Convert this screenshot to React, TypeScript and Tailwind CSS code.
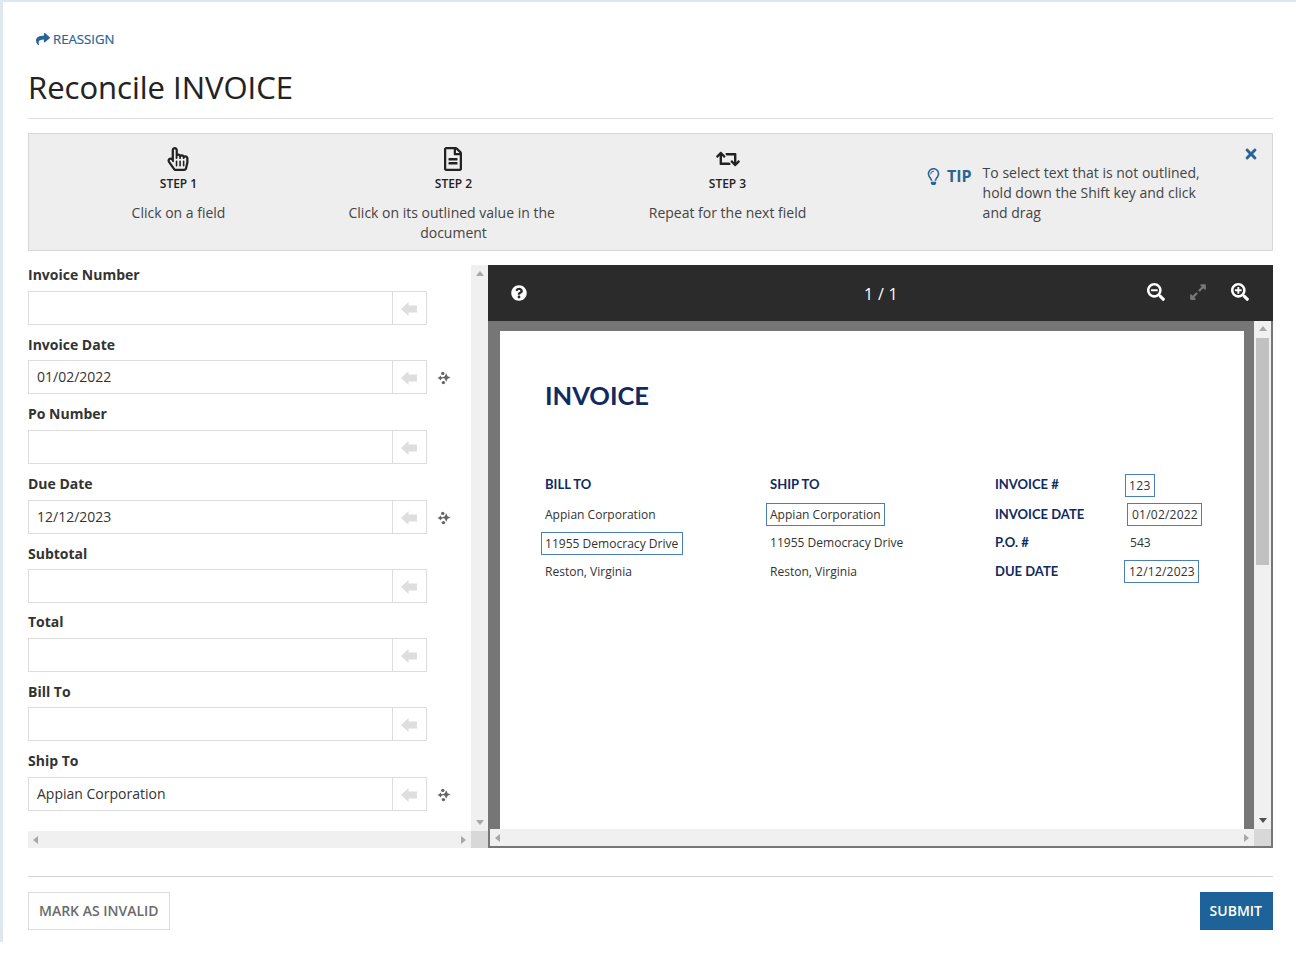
import React from "react";
import { FaRegHandPointer, FaRegFileAlt, FaRetweet, FaShare, FaTimes, FaSearchMinus, FaSearchPlus, FaExpandAlt, FaQuestionCircle, FaRegLightbulb } from "react-icons/fa";

const fields: { label: string; value: string; spark?: boolean; gap: string; labelClass: string }[] = [
  { label: "Invoice Number", value: "", gap: "mt-0", labelClass: "" },
  { label: "Invoice Date", value: "01/02/2022", spark: true, gap: "mt-[9px]", labelClass: "pt-[1px]" },
  { label: "Po Number", value: "", gap: "mt-[10px]", labelClass: "" },
  { label: "Due Date", value: "12/12/2023", spark: true, gap: "mt-[10px]", labelClass: "" },
  { label: "Subtotal", value: "", gap: "mt-[9px]", labelClass: "pt-[1px]" },
  { label: "Total", value: "", gap: "mt-[9px]", labelClass: "" },
  { label: "Bill To", value: "", gap: "mt-[9px]", labelClass: "pt-[1px]" },
  { label: "Ship To", value: "Appian Corporation", spark: true, gap: "mt-[10px]", labelClass: "" },
];

function Sparkle() {
  return (
    <svg width="14" height="14" viewBox="0 0 14 14" className="text-[#666]" fill="currentColor">
      <path d="M9.2 2.2 L10.6 5.2 L13.6 6.5 L10.6 7.8 L9.2 10.8 L7.8 7.8 L4.8 6.5 L7.8 5.2 Z" />
      <path d="M3.4 4.4 L4.4 6 L6.4 7 L4.4 8 L3.4 9.6 L2.4 8 L0.4 7 L2.4 6 Z" />
      <circle cx="5.8" cy="2.4" r="1.7" />
      <circle cx="6.4" cy="11.6" r="1.7" />
    </svg>
  );
}

function BlockArrow() {
  return (
    <svg width="16" height="14" viewBox="0 0 16 14" fill="#dedede">
      <path d="M0 7 L7.5 0 L7.5 3.5 L16 3.5 L16 10.5 L7.5 10.5 L7.5 14 Z" />
    </svg>
  );
}

function Field({ label, value, spark, gap, labelClass }: { label: string; value: string; spark?: boolean; gap: string; labelClass: string }) {
  return (
    <div className={"flex flex-col shrink-0 " + gap}>
      <div className={"h-[26px] text-[14px] leading-[20px] font-bold text-[#333] " + labelClass}>{label}</div>
      <div className="flex items-center w-[423px]">
        <div className="w-[364px] h-[34px] border border-[#dcdcdc] border-r-0 px-2 text-[14px] leading-[32px] text-[#333]">{value}</div>
        <div className="w-[35px] h-[34px] border border-[#dcdcdc] flex items-center justify-center pt-[1px] pr-[1px]">
          <BlockArrow />
        </div>
        {spark && <div className="ml-[10px] pt-[1px]"><Sparkle /></div>}
      </div>
    </div>
  );
}

function Step({ icon, title, text, className, iconClass }: { icon: React.ReactNode; title: string; text: React.ReactNode; className: string; iconClass: string }) {
  return (
    <div className={"w-[275px] flex flex-col items-center text-center pt-[13px] " + className}>
      <div className={"h-[24px] flex items-center justify-center text-[24px] text-[#222] " + iconClass}>{icon}</div>
      <div className="mt-[3px] h-[20px] text-[12px] leading-[20px] font-semibold text-[#222]">{title}</div>
      <div className="mt-[9px] w-[225px] text-[14px] leading-[20px] text-[#444]">{text}</div>
    </div>
  );
}

function Boxed({ children, className }: { children: React.ReactNode; className: string }) {
  return <span className={"inline-block border border-[#4a80b8] bg-white h-[23px] leading-[21px] pl-[3px] pr-[3.5px] " + className}>{children}</span>;
}

function DocHead({ children }: { children: React.ReactNode }) {
  return <div className="text-[13px] font-bold text-[#112a61]" style={{ fontFamily: "Lato, sans-serif" }}>{children}</div>;
}

export default function App() {
  return (
    <div className="h-[980px] bg-white" style={{ fontFamily: '"Open Sans", sans-serif' }}>
      <div className="h-[942px] border-t-2 border-l-[3px] border-[#dfe7ef] pl-[25px] pr-[23px] flex flex-col">
        <div className="h-[74px] pt-[27px] pl-[8px] flex items-start">
          <a className="flex items-center gap-[3px] text-[13.2px] leading-[20px] text-[#2a6496]">
            <FaShare className="text-[14px]" />
            <span className="[-webkit-text-stroke:0.2px_#2a6496]">REASSIGN</span>
          </a>
        </div>
        <h1 className="h-[42px] text-[31px] leading-[22px] font-medium text-[#222] [-webkit-text-stroke:0.1px_#222]">Reconcile INVOICE</h1>
        <div className="h-px bg-[#dcdcdc] mb-[14px]" />

        <div className="relative h-[118px] bg-[#eeeeee] border border-[#d8d8d8] flex pl-[12px] shrink-0">
          <Step className="" iconClass="pr-[2px]" icon={<FaRegHandPointer />} title="STEP 1" text="Click on a field" />
          <Step className="" iconClass="pr-[2px]" icon={<FaRegFileAlt />} title="STEP 2" text={<>Click on its outlined value in the&nbsp;<br />document</>} />
          <Step className="-ml-[1px]" iconClass="" icon={<FaRetweet />} title="STEP 3" text="Repeat for the next field" />
          <div className="flex pt-[30px] pl-[60px]">
            <FaRegLightbulb className="text-[#2a6496] text-[17px] mt-[4px]" />
            <span className="ml-[5px] text-[16px] leading-[24px] font-bold text-[#2a6496]">TIP</span>
            <p className="ml-[11px] w-[222px] text-[14px] leading-[20px] text-[#444] -mt-[1px]">To select text that is not outlined, hold down the Shift key and click and drag</p>
          </div>
          <FaTimes className="absolute right-[13px] top-[12px] text-[#2a6496] text-[16px]" />
        </div>

        <div className="mt-[14px] h-[583px] flex shrink-0">
          <div className="w-[460px] flex flex-col">
            <div className="flex-1 flex min-h-0">
              <div className="flex-1 flex flex-col overflow-hidden">
                {fields.map((f) => <Field key={f.label} {...f} />)}
              </div>
              <div className="w-[17px] bg-[#f0f0f0] flex flex-col items-center justify-between py-[6px]">
                <div className="w-0 h-0 border-x-[4px] border-x-transparent border-b-[5px] border-b-[#a8a8a8]" />
                <div className="w-0 h-0 border-x-[4px] border-x-transparent border-t-[5px] border-t-[#a8a8a8]" />
              </div>
            </div>
            <div className="h-[17px] flex">
              <div className="flex-1 bg-[#f0f0f0] flex items-center justify-between px-[5px]">
                <div className="w-0 h-0 border-y-[4px] border-y-transparent border-r-[5px] border-r-[#a8a8a8]" />
                <div className="w-0 h-0 border-y-[4px] border-y-transparent border-l-[5px] border-l-[#a8a8a8]" />
              </div>
              <div className="w-[17px] bg-[#d8d8d8]" />
            </div>
          </div>

          <div className="w-[785px] flex flex-col">
            <div className="h-[56px] bg-[#2b2b2b] grid grid-cols-[1fr_auto_1fr] items-center pl-[23px] pr-[22px] text-white shrink-0">
              <FaQuestionCircle className="text-[16px] -mt-[1px]" />
              <div className="text-center text-[16px] tracking-[0.3px] pt-[1px]">1 / 1</div>
              <div className="flex items-center justify-end gap-[24px] text-[18px] -mt-[3px] pr-[2px]">
                <FaSearchMinus />
                <FaExpandAlt className="text-[#777]" />
                <FaSearchPlus />
              </div>
            </div>
            <div className="flex-1 min-h-0 border-x-2 border-b-2 border-[#767676] bg-[#767676] flex flex-col">
              <div className="flex-1 min-h-0 flex">
                <div className="flex-1 pl-[10px] pr-[10px] pt-[10px]">
                  <div className="h-full bg-white pl-[45px] pt-[46px] text-[12.05px] text-[#333]">
                    <div className="h-[36px] text-[25.5px] leading-[36px] font-bold text-[#112a61]" style={{ fontFamily: "Lato, sans-serif" }}>INVOICE</div>
                    <div className="mt-[57px] grid grid-cols-[225px_225px_135px_1fr] grid-rows-[30px_29px_28px_29px] items-center">
                      <DocHead>BILL TO</DocHead>
                      <DocHead>SHIP TO</DocHead>
                      <DocHead>INVOICE #</DocHead>
                      <div><Boxed className="-ml-[5px] tracking-[0.3px]">123</Boxed></div>

                      <div className="pt-[1px]">Appian Corporation</div>
                      <div><Boxed className="-ml-[4px]">Appian Corporation</Boxed></div>
                      <DocHead>INVOICE DATE</DocHead>
                      <div><Boxed className="-ml-[3px] pl-[4px] tracking-[0.2px]">01/02/2022</Boxed></div>

                      <div><Boxed className="-ml-[4px]">11955 Democracy Drive</Boxed></div>
                      <div>11955 Democracy Drive</div>
                      <DocHead>P.O. #</DocHead>
                      <div>543</div>

                      <div className="pt-[1px]">Reston, Virginia</div>
                      <div className="pt-[1px]">Reston, Virginia</div>
                      <DocHead>DUE DATE</DocHead>
                      <div><Boxed className="-ml-[6px] pl-[4px] tracking-[0.2px]">12/12/2023</Boxed></div>
                    </div>
                  </div>
                </div>
                <div className="w-[17px] bg-[#f0f0f0] flex flex-col items-center pt-[5px] pb-[6px]">
                  <div className="w-0 h-0 border-x-[4px] border-x-transparent border-b-[5px] border-b-[#a8a8a8]" />
                  <div className="mt-[7px] w-[13px] h-[227px] bg-[#c1c1c1]" />
                  <div className="mt-auto w-0 h-0 border-x-[4px] border-x-transparent border-t-[5px] border-t-[#505050]" />
                </div>
              </div>
              <div className="h-[17px] flex shrink-0">
                <div className="flex-1 bg-[#f0f0f0] flex items-center justify-between px-[5px]">
                  <div className="w-0 h-0 border-y-[4px] border-y-transparent border-r-[5px] border-r-[#a8a8a8]" />
                  <div className="w-0 h-0 border-y-[4px] border-y-transparent border-l-[5px] border-l-[#a8a8a8]" />
                </div>
                <div className="w-[17px] bg-[#d8d8d8]" />
              </div>
            </div>
          </div>
        </div>

        <div className="h-px bg-[#d4d4d4] mt-[28px] shrink-0" />
        <div className="mt-[15px] flex justify-between">
          <button className="h-[38px] px-[10px] pb-[2px] border border-[#dcdcdc] bg-white text-[14px] font-semibold text-[#6b6b6b]">MARK AS INVALID</button>
          <button className="h-[38px] pl-[10px] pr-[11px] pb-[2px] bg-[#1d6399] text-[14px] font-semibold text-white">SUBMIT</button>
        </div>
      </div>
    </div>
  );
}
